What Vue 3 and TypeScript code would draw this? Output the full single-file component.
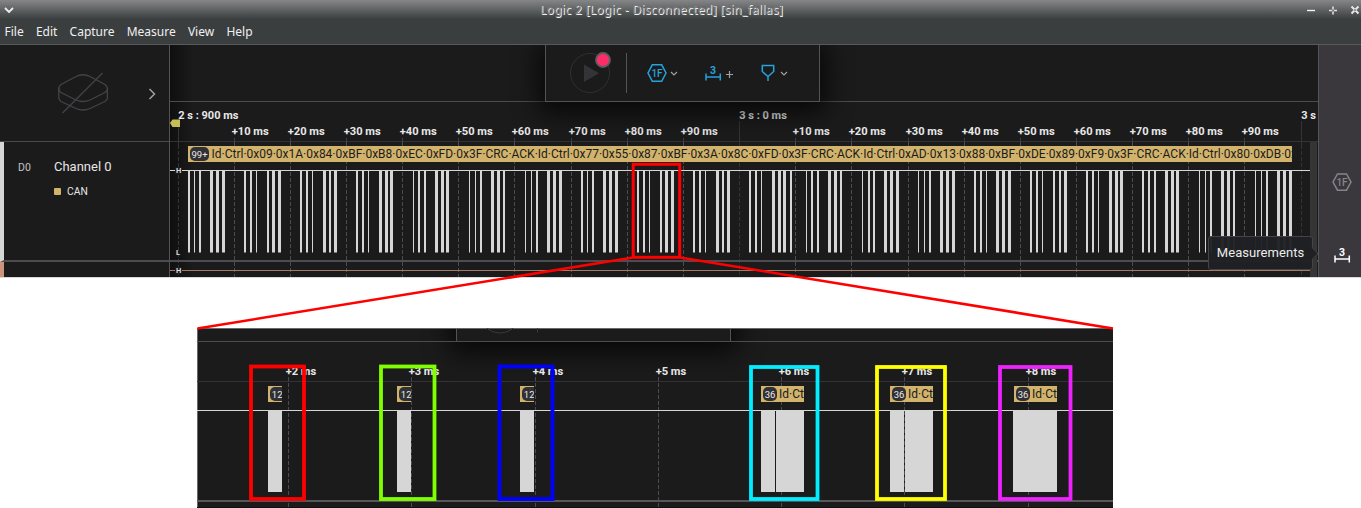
<script setup lang="ts">
interface Tick { x: number; label: string }
interface Span { x: number; w: number }
interface Packet { x: number; w: number; count: string; text?: string }
interface Frame { x: number; y: number; w: number; h: number; color: string }

const menus: string[] = ['File', 'Edit', 'Capture', 'Measure', 'View', 'Help']

const tens = [10, 20, 30, 40, 50, 60, 70, 80, 90]
const firstXs = [234, 290, 346, 402, 458, 514, 571, 627, 683]
const secondXs = [795, 851, 908, 964, 1020, 1076, 1132, 1188, 1244]
const ticks: Tick[] = [
  ...tens.map((t, i) => ({ x: firstXs[i], label: `+${t} ms` })),
  ...tens.map((t, i) => ({ x: secondXs[i], label: `+${t} ms` })),
]
const majors: Tick[] = [
  { x: 178, label: '2 s : 900 ms' },
  { x: 739, label: '3 s : 0 ms' },
  { x: 1301, label: '3 s' },
]

// Each pair is the first pixel column and width of a burst on the bus.
const bursts: number[][] = [
  [188, 2, 194, 1, 199, 2, 210, 3, 216, 3, 222, 3],
  [244, 2, 250, 2, 256, 1, 267, 2, 272, 3, 278, 3],
  [300, 2, 306, 2, 312, 1, 323, 3, 329, 2, 334, 3],
  [356, 2, 362, 2, 368, 1, 379, 3, 385, 3, 390, 3],
  [413, 1, 418, 2, 424, 2, 435, 3, 441, 3, 446, 3],
  [469, 1, 475, 1, 480, 2, 491, 3, 497, 3, 503, 2],
  [525, 1, 531, 1, 536, 2, 547, 3, 553, 3, 559, 3],
  [581, 2, 587, 1, 592, 2, 603, 3, 609, 3, 615, 3],
  [637, 2, 643, 2, 649, 1, 660, 2, 665, 3, 671, 3],
  [693, 2, 699, 2, 705, 1, 716, 3, 722, 2, 727, 3],
  [749, 2, 755, 2, 761, 1, 772, 3, 778, 3, 783, 3, 790, 2],
  [806, 1, 811, 2, 817, 2, 828, 3, 834, 3, 840, 2],
  [862, 1, 868, 2, 873, 2, 884, 3, 890, 3, 896, 3],
  [918, 1, 924, 1, 929, 2, 940, 3, 946, 3, 952, 3],
  [974, 2, 980, 2, 986, 1, 996, 3, 1002, 3, 1008, 3],
  [1030, 2, 1036, 2, 1042, 1, 1053, 2, 1059, 2, 1064, 3],
  [1086, 2, 1092, 2, 1098, 1, 1109, 3, 1115, 3, 1120, 3],
  [1142, 2, 1148, 2, 1154, 2, 1165, 3, 1171, 3, 1176, 3],
  [1199, 1, 1205, 1, 1210, 2, 1221, 3, 1227, 3, 1233, 2],
  [1255, 1, 1261, 1, 1266, 2, 1277, 3, 1283, 3, 1289, 3],
]
const bars: Span[] = bursts.flatMap(b => {
  const out: Span[] = []
  for (let i = 0; i < b.length; i += 2) out.push({ x: b[i], w: b[i + 1] })
  return out
})

const decoded =
  'Id·Ctrl·0x09·0x1A·0x84·0xBF·0xB8·0xEC·0xFD·0x3F·CRC·ACK·Id·Ctrl·0x77·0x55·0x87·0xBF·0x3A·0x8C·0xFD·0x3F·CRC·ACK·Id·Ctrl·0xAD·0x13·0x88·0xBF·0xDE·0x89·0xF9·0x3F·CRC·ACK·Id·Ctrl·0x80·0xDB·0x'

const detailTicks: Tick[] = [
  { x: 288, label: '+2 ms' },
  { x: 411, label: '+3 ms' },
  { x: 535, label: '+4 ms' },
  { x: 658, label: '+5 ms' },
  { x: 781, label: '+6 ms' },
  { x: 904, label: '+7 ms' },
  { x: 1028, label: '+8 ms' },
]
const detailBars: Span[] = [
  { x: 268, w: 14 }, { x: 397, w: 14 }, { x: 520, w: 14 },
  { x: 761, w: 14 }, { x: 776, w: 28 },
  { x: 890, w: 14 }, { x: 905, w: 28 }, { x: 1013, w: 44 },
]
const packets: Packet[] = [
  { x: 268, w: 14, count: '12' },
  { x: 397, w: 14, count: '12' },
  { x: 520, w: 14, count: '12' },
  { x: 761, w: 43, count: '36', text: 'Id·Ctrl' },
  { x: 890, w: 43, count: '36', text: 'Id·Ctrl' },
  { x: 1014, w: 43, count: '36', text: 'Id·Ctrl' },
]
const frames: Frame[] = [
  { x: 251, y: 366.5, w: 53, h: 132.5, color: '#ff0000' },
  { x: 381, y: 366.5, w: 53.5, h: 132.5, color: '#80ff00' },
  { x: 499.5, y: 366.5, w: 53, h: 132.5, color: '#0000ff' },
  { x: 751, y: 367, w: 66.5, h: 132, color: '#00eeff' },
  { x: 877, y: 367, w: 68, h: 132, color: '#ffff00' },
  { x: 1000, y: 367, w: 70.5, h: 132, color: '#ee22ff' },
]
</script>

<template>
  <div class="page">
    <div class="window">
      <header class="titlebar">
        <svg class="tb-menu" width="10" height="8" viewBox="0 0 10 8"><path d="M1 2L5 6L9 2" fill="none" stroke="#eee" stroke-width="1.8" /></svg>
        <span class="title">Logic 2 [Logic - Disconnected] [sin_fallas]</span>
        <svg class="tb-buttons" width="56" height="12" viewBox="1305 3 56 12">
          <path d="M1307 9.5H1315" stroke="#f2f2f2" stroke-width="1.4" />
          <path d="M1329 9.5H1337M1333 5.5V13.5" stroke="#e0e0e0" stroke-width="1.6" />
          <path d="M1351.500 5.500L1358.500 12.500M1358.500 5.500L1351.500 12.500" stroke="#e8e8e8" stroke-width="2" />
          <rect x="1332" y="8.500" width="2" height="2" fill="#777" />
          <rect x="1354" y="8" width="2" height="2" fill="#999" />
        </svg>
      </header>
      <nav class="menubar">
        <span v-for="m in menus" :key="m">{{ m }}</span>
      </nav>
      <main class="workspace">
        <aside class="channels">
          <div class="device">
            <svg class="device-icon" width="54" height="44" viewBox="56 72 54 44" fill="none" stroke="#444347" stroke-width="1.3">
              <path d="M61 85.500L76 77.500Q83 74 90 77.500L105 85.500Q110 89.500 105 93.500L90 101Q83 104 76 101L61 93.500Q56.500 89.500 61 85.500Z" />
              <path d="M58.800 88.500V99Q59 101 61 102.500L76 109.500Q83 112.500 90 109.500L105 102.500Q107.400 101 107.400 99V88.500" />
              <path d="M62.500 114L102.500 74" />
            </svg>
            <svg class="device-arrow" width="8" height="12" viewBox="0 0 8 12"><path d="M1.500 1L6.500 6L1.500 11" fill="none" stroke="#a0a0a2" stroke-width="1.500" /></svg>
          </div>
          <div class="channel">
            <span class="chan-id">D0</span>
            <div class="chan-info">
              <div class="chan-name">Channel 0</div>
              <div class="analyzer"><i class="swatch"></i><span>CAN</span></div>
            </div>
          </div>
          <div class="channel next"></div>
        </aside>

        <section class="capture">
          <svg class="plot" width="1148" height="232" viewBox="170 45 1148 232">
            <defs>
              <clipPath id="decode-clip"><rect x="188" y="146" width="1104" height="16" /></clipPath>
              <linearGradient id="edge" x1="0" x2="1"><stop offset="0" stop-color="#000" stop-opacity=".45" /><stop offset="1" stop-color="#000" stop-opacity="0" /></linearGradient>
            </defs>
            <rect x="170" y="45" width="24" height="232" fill="url(#edge)" />
            <rect x="170" y="101" width="1148" height="1" fill="#4c4b50" />
            <rect x="170" y="141" width="1148" height="1" fill="#333236" />
            <g class="tick">
              <text v-for="t in ticks" :key="t.x" :x="t.x - 2.300" y="135" textLength="37" lengthAdjust="spacingAndGlyphs">{{ t.label }}</text>
              <text v-for="m in majors" :key="m.x" :x="m.x + 0.300" y="119">{{ m.label }}</text>
            </g>
            <g stroke="#4b4b51">
              <template v-for="t in ticks" :key="t.x">
                <path :d="`M${t.x + 0.5} 138V142`" stroke="#414145" />
                <path :d="`M${t.x + 0.5} 142V277`" stroke-dasharray="4 2" />
              </template>
            </g>
            <g stroke="#343438">
              <template v-for="m in majors" :key="m.x">
                <path :d="`M${m.x + 0.5} 121V145`" />
                <path :d="`M${m.x + 0.5} 145V277`" stroke-dasharray="4 2" />
              </template>
            </g>
            <rect x="170" y="170" width="1140" height="1" fill="#d6d6d6" />
            <rect v-for="b in bars" :key="b.x" :x="b.x" y="171" :width="b.w" height="81.500" fill="#d6d6d6" />
            <g clip-path="url(#decode-clip)">
              <rect x="188" y="146" width="1104" height="16" fill="#d2b36c" />
              <rect x="190" y="147" width="19" height="14" rx="5" fill="#303035" />
              <text class="count" x="199.500" y="157.500" text-anchor="middle">99+</text>
              <text class="decoded" x="211.500" y="158.300" textLength="1085.500">{{ decoded }}</text>
            </g>
            <rect x="170" y="260" width="1148" height="2" fill="#4d4c51" />
            <rect x="170" y="270" width="1140" height="1" fill="#a37a66" />
            <rect x="175" y="167" width="7" height="7" fill="#1b1b1b" />
            <rect x="175" y="267" width="7" height="7" fill="#1b1b1b" />
            <g class="level">
              <text x="176" y="173">H</text><text x="176" y="255">L</text><text x="176" y="273">H</text>
            </g>
            <path d="M170 123L172.500 119.500H180V127H172.500Z" fill="#c8bd55" />
            <rect x="1310" y="142" width="7" height="135" fill="#353536" />
          </svg>

          <div class="toolbar">
            <svg width="273" height="56" viewBox="546 45 273 56" fill="none">
              <circle cx="590" cy="73" r="19.500" stroke="#302f34" />
              <path d="M584 64.500L599 73.300L584 82Z" fill="#343338" />
              <circle cx="603" cy="60" r="7" fill="#ff2d67" stroke="#5d5c62" stroke-width="1.800" />
              <path d="M626.500 53V93" stroke="#545358" />
              <g stroke="#25a3dc" stroke-width="1.500">
                <path d="M652.300 64.800H661.700L666 73L661.700 81.300H652.300L648 73Z" />
                <path d="M706 73.500V80.500M720.300 73.500V80.500M706 77H720.300" stroke-width="1.500" />
                <path d="M762.300 65.500H773.700V71.500L768 76.500L762.300 71.500ZM768 76.500V81" />
              </g>
              <text class="hex" x="657" y="77" text-anchor="middle" fill="#25a3dc">1F</text>
              <text class="three" x="713" y="74" text-anchor="middle" fill="#25a3dc">3</text>
              <path d="M671 72L674 75L677 72M781 72L784 75L787 72M726 74.500H733M729.500 71V78" stroke="#a0a0a2" stroke-width="1.200" />
            </svg>
          </div>
          <div class="tooltip">Measurements</div>
        </section>

        <aside class="rail">
          <svg width="42" height="232" viewBox="1319 45 42 232" fill="none">
            <path d="M1337.500 174H1346.500L1351 182L1346.500 190.200H1337.500L1333 182Z" stroke="#858488" stroke-width="1.500" />
            <text class="hex" x="1342" y="186" text-anchor="middle" fill="#858488">1F</text>
            <text class="three" x="1342" y="256" text-anchor="middle" fill="#fff">3</text>
            <path d="M1335 255.500V262.500M1349.300 255.500V262.500M1335 259H1349.300" stroke="#fff" stroke-width="1.500" />
          </svg>
        </aside>
      </main>
    </div>

    <section class="detail">
      <div class="detail-top"><div class="detail-toolbar"></div></div>
      <svg class="plot detail-plot" width="916" height="180" viewBox="197 328 916 180">
        <path d="M197.500 328V508M197 328.500H1113" stroke="#68676b" />
        <path d="M484 325A20 20 0 0 0 516 325M537.500 328V332.500" fill="none" stroke="#39383d" />
        <rect x="197" y="341" width="916" height="1" fill="#4c4b50" />
        <rect x="197" y="381" width="916" height="1" fill="#333236" />
        <g class="tick">
          <text v-for="t in detailTicks" :key="t.x" :x="t.x - 2.300" y="375" textLength="30.500" lengthAdjust="spacingAndGlyphs">{{ t.label }}</text>
        </g>
        <path v-for="t in detailTicks" :key="t.x" :d="`M${t.x + 0.5} 377V508`" stroke="#4b4b51" stroke-dasharray="4 2" />
        <rect x="197" y="410" width="916" height="1" fill="#d6d6d6" />
        <rect v-for="b in detailBars" :key="b.x" :x="b.x" y="411" :width="b.w" height="81" fill="#d6d6d6" />
        <path d="M904.500 411V492" stroke="#1b1b1b" /><path d="M904.500 411V492" stroke="#4b4b51" stroke-dasharray="4 2" />
        <svg v-for="p in packets" :key="p.x" :x="p.x" y="386" :width="p.w" height="16">
          <rect width="60" height="16" fill="#d2b36c" />
          <rect x="2" y="1" :width="p.text ? 14 : 16" height="14" rx="5" fill="#303035" />
          <text class="count" :x="p.text ? 9 : 9.200" y="11.500" text-anchor="middle">{{ p.count }}</text>
          <text v-if="p.text" class="decoded" x="18" y="12.300">{{ p.text }}</text>
        </svg>
        <rect x="197" y="500" width="916" height="2" fill="#57565b" />
        <rect x="197" y="507" width="916" height="1" fill="#120d0f" />
      </svg>
    </section>

    <svg class="annotations" width="1361" height="508" viewBox="0 0 1361 508" fill="none">
      <path d="M633 257.500L197.500 328.500M680 257.500L1113 328.500" stroke="#ff0000" stroke-width="2.600" />
      <rect x="633.200" y="164.300" width="46.500" height="93" stroke="#ff0000" stroke-width="3" />
      <rect v-for="f in frames" :key="f.color" :x="f.x" :y="f.y" :width="f.w" :height="f.h" :stroke="f.color" stroke-width="3.800" />
    </svg>
  </div>
</template>

<style>
html, body { margin: 0; background: #fff; overflow: hidden; }
</style>

<style scoped>
.page { position: relative; width: 1361px; height: 508px; background: #fff; font-family: Roboto, "Liberation Sans", sans-serif; overflow: hidden; }
.window { height: 278px; display: flex; flex-direction: column; background: #1b1b1b; border-bottom: 1px solid #d8d8d8; box-sizing: border-box; overflow: hidden; }
.titlebar { height: 19px; flex: none; display: flex; align-items: center; justify-content: space-between; background: linear-gradient(#858687, #3b3f40); }
.tb-menu { margin-left: 4px; width: 10px; }
.title { font: 12px/19px "Noto Sans", sans-serif; letter-spacing: .32px; color: #77797a; text-shadow: 1px 1px 0 #f0f0f0; white-space: nowrap; margin-left: 4px; }
.tb-buttons { display: block; }
.menubar { height: 25px; flex: none; display: flex; gap: 12.200px; padding-left: 4.500px; border-bottom: 1px solid #58595c; background: #3a3e3f; color: #f0f0f0; font: 12px/25px "Noto Sans", sans-serif; }
.workspace { height: 232px; flex: none; display: flex; }
.channels { width: 169px; flex: none; border-right: 1px solid #535257; }
.device { height: 96px; display: flex; align-items: center; border-bottom: 1px solid #4a494e; }
.device-icon { margin-left: 56px; }
.device-arrow { margin-left: 37.500px; margin-top: 2px; }
.channel { height: 120px; display: flex; box-sizing: border-box; border-left: 4px solid #d6d6d6; border-bottom: 2px solid #4d4c51; }
.channel.next { height: 15px; border-left-color: #cc957b; border-bottom: 0; }
.chan-id { width: 36px; padding: 19px 0 0 14px; box-sizing: border-box; font-size: 10.500px; line-height: 14px; color: #c3c3c5; }
.chan-info { padding: 17px 0 0 14px; color: #e6e6e6; }
.chan-name { font-size: 13px; line-height: 16px; }
.analyzer { display: flex; align-items: center; gap: 6px; margin-top: 9px; font-size: 10.300px; line-height: 15px; }
.swatch { width: 7px; height: 7px; border-radius: 1px; background: #d2b36c; }
.capture { position: relative; width: 1148px; flex: none; overflow: hidden; }
.plot { display: block; }
.tick { font-size: 11px; font-weight: 700; fill: #e8e8e8; }
.count { font-size: 9.500px; fill: #e8e8e8; }
.decoded { font-size: 12px; fill: #1b1b1b; }
.level { font-size: 7.500px; font-weight: 700; fill: #ddd; }
.toolbar { position: absolute; left: 375px; top: 0; width: 273px; height: 56px; border: 1px solid #535257; border-top: 0; background: #1b1b1b; box-shadow: 0 4px 26px 6px rgba(0, 0, 0, .75); }
.toolbar svg { display: block; }
.hex { font-size: 10px; font-weight: 500; }
.three { font-size: 10.500px; font-weight: 700; }
.tooltip { position: absolute; left: 1038px; top: 191px; width: 103px; height: 32px; border: 1px solid #434348; border-radius: 3px; background: rgba(32, 33, 36, .97); color: #ececec; font-size: 13px; line-height: 31px; text-align: center; letter-spacing: .05px; }
.tooltip::after { content: ""; position: absolute; right: -5px; top: 12px; width: 8px; height: 8px; transform: rotate(45deg); border-top: 1px solid #434348; border-right: 1px solid #434348; background: #202124; }
.rail { flex: 1; border-left: 1px solid #55545a; background: #3a383d; }
.rail svg { display: block; }
.detail { position: relative; margin: 50px 0 0 197px; width: 916px; height: 180px; background: #1b1b1b; overflow: hidden; }
.detail-top { position: absolute; left: 259px; top: -44px; width: 273px; height: 57px; }
.detail-toolbar { width: 273px; height: 57px; border: 1px solid #535257; border-top: 0; background: #1b1b1b; box-shadow: 0 4px 26px 6px rgba(0, 0, 0, .75); }
.detail-plot { position: relative; }
.annotations { position: absolute; left: 0; top: 0; }
</style>
